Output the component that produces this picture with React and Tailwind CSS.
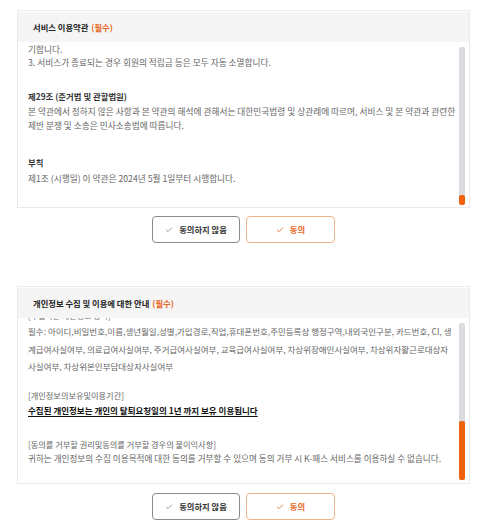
import { Check } from 'lucide-react';

const font = { fontFamily: '"Noto Sans CJK KR", "Noto Sans", sans-serif' };

function Scrollbar({ thumbTop, thumbHeight }) {
    // 스크롤바 트랙 + 주황색 썸
    return (
        <div className="absolute right-[4px] top-[5px] bottom-[3px] w-[6px] rounded-[2px] bg-[#dcdce0]">
            <div
                className="absolute left-0 right-0 rounded-[2px] bg-[#f0620e]"
                style={{ top: thumbTop, height: thumbHeight }}
            />
        </div>
    );
}

function Buttons() {
    return (
        <div className="flex justify-center gap-[6px]">
            <button className="flex h-[27px] w-[88px] items-center justify-center gap-[6px] rounded-[4px] border border-[#8c8c8c] bg-white text-[8.3px] font-semibold text-[#333]">
                <Check size={8} strokeWidth={2} className="text-[#666]" />
                동의하지 않음
            </button>
            <button className="flex h-[27px] w-[89px] items-center justify-center gap-[6px] rounded-[4px] border border-[#efb38a] bg-white text-[8.3px] font-semibold text-[#e8661f]">
                <Check size={8} strokeWidth={2.5} />
                동의
            </button>
        </div>
    );
}

function Card({ title, children, thumbTop, thumbHeight }) {
    return (
        <div className="w-[453px] border border-[#ebebeb] bg-white pt-[1px]">
            <div className="flex h-[30px] items-center bg-[#f5f5f5] px-[15px] text-[8.3px] font-bold text-[#222]">
                {title}
                <span className="ml-[3px] text-[#e8661f]">(필수)</span>
            </div>
            <div className="relative h-[165px] overflow-hidden pl-[10px] pr-[4px]">
                {children}
                <Scrollbar thumbTop={thumbTop} thumbHeight={thumbHeight} />
            </div>
        </div>
    );
}

export default function App() {
    return (
        <div className="min-h-[529px] bg-white pt-[10px]" style={font}>
            <div className="mx-[17px] flex w-[453px] flex-col">

                {/* 서비스 이용약관 */}
                <Card title="서비스 이용약관" thumbTop={148} thumbHeight={10}>
                    <div className="pt-[1px] text-[8.7px] leading-[13px] text-[#666]">
                        <p>기합니다.</p>
                        <p>3. 서비스가 종료되는 경우 회원의 적립금 등은 모두 자동 소멸합니다.</p>
                    </div>
                    <p className="mt-[20px] text-[8.4px] font-bold leading-[14px] text-[#333]">제29조 (준거법 및 관할법원)</p>
                    <p className="mt-[2px] text-[8.7px] leading-[14px] text-[#666]">
                        본 약관에서 정하지 않은 사항과 본 약관의 해석에 관해서는 대한민국법령 및 상관례에 따르며, 서비스 및 본 약관과 관련한<br />
                        제반 분쟁 및 소송은 민사소송법에 따릅니다.
                    </p>
                    <p className="mt-[22px] text-[8.4px] font-bold leading-[14px] text-[#333]">부칙</p>
                    <p className="mt-[3px] text-[8.7px] leading-[14px] text-[#666]">제1조 (시행일) 이 약관은 2024년 5월 1일부터 시행합니다.</p>
                </Card>

                <div className="mt-[8px]">
                    <Buttons />
                </div>

                {/* 개인정보 수집 및 이용 */}
                <div className="mt-[43px]">
                    <Card title="개인정보 수집 및 이용에 대한 안내" thumbTop={98} thumbHeight={59}>
                        <div className="-mt-[9px]">
                            <p className="text-[8px] leading-[14px] text-[#777]">[수집하는 개인정보 항목]</p>
                            <p className="text-[8.5px] leading-[17.5px] text-[#666]">
                                필수: 아이디,비밀번호,이름,생년월일,성별,가입경로,직업,휴대폰번호,주민등록상 행정구역,내외국인구분, 카드번호, CI, 생<br />
                                계급여사실여부, 의료급여사실여부, 주거급여사실여부, 교육급여사실여부, 차상위장애인사실여부, 차상위자활근로대상자<br />
                                사실여부, 차상위본인부담대상자사실여부
                            </p>
                            <p className="mt-[13px] text-[8.2px] leading-[13px] text-[#666]">[개인정보의보유및이용기간]</p>
                            <p className="mt-[1px] text-[8.5px] font-bold leading-[14px] text-[#111]">
                                <span className="underline underline-offset-2">수집된 개인정보는 개인의 탈퇴요청일의 1년 까지 보유 이용됩니다</span>
                            </p>
                            <p className="mt-[21px] text-[8.2px] leading-[13px] text-[#666]">[동의를 거부할 권리및동의를 거부할 경우의 불이익사항]</p>
                            <p className="text-[8.6px] leading-[14px] text-[#666]">
                                귀하는 개인정보의 수집 이용목적에 대한 동의를 거부할 수 있으며 동의 거부 시 K-패스 서비스를 이용하실 수 없습니다.
                            </p>
                        </div>
                    </Card>
                </div>

                <div className="mt-[9px]">
                    <Buttons />
                </div>
            </div>
        </div>
    );
}
